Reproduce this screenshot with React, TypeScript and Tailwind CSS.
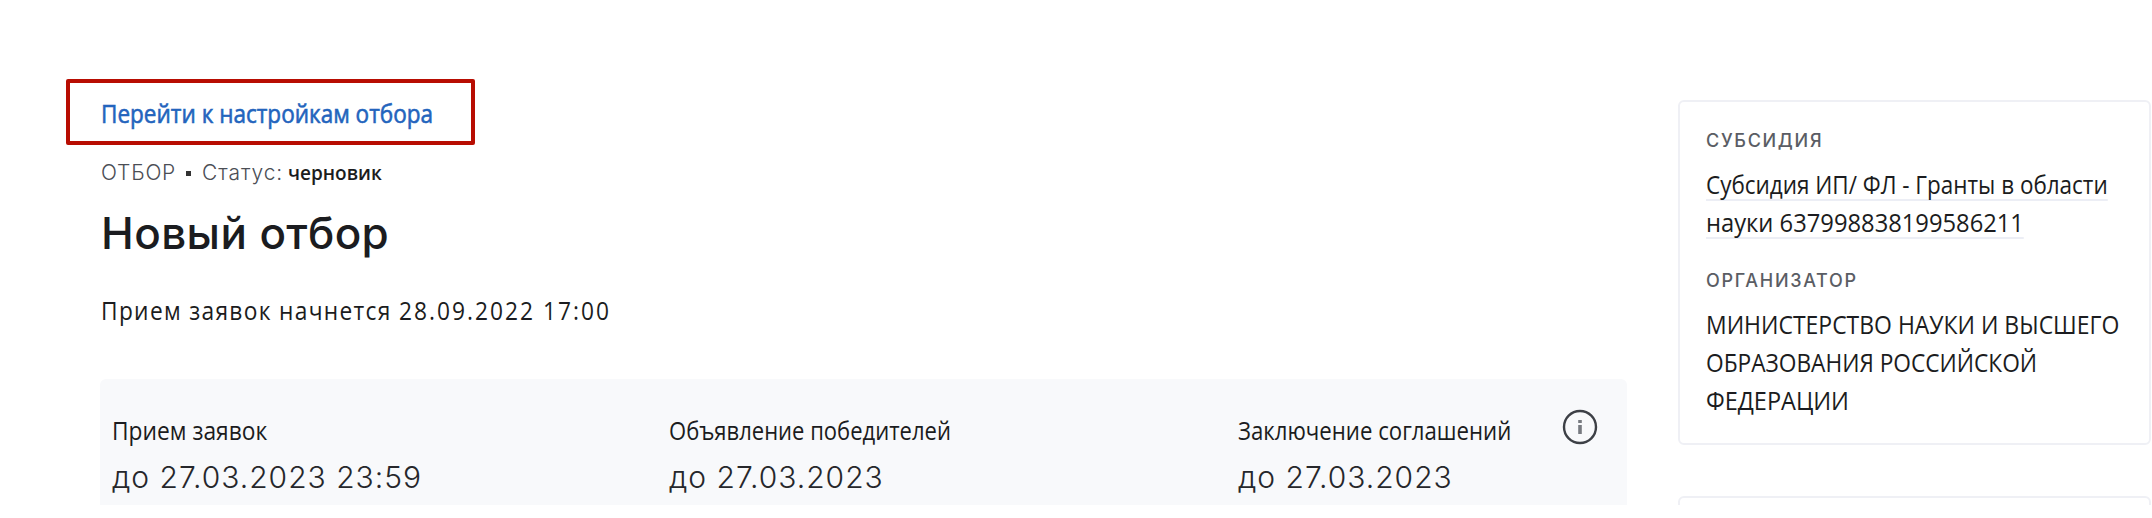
import type { ReactNode } from "react";

const pt = "font-['Open_Sans','Noto_Sans',sans-serif]";
const golos = "font-['Inter','Noto_Sans',sans-serif]";

function Line({ className, children }: { className: string; children: ReactNode }) {
  return <span className={`block w-max whitespace-nowrap origin-left ${className}`}>{children}</span>;
}

function Stage({ title, value, className, titleClass }: { title: string; value: string; className: string; titleClass: string }) {
  return (
    <div className={`shrink-0 ${className}`}>
      <Line className={`${pt} text-[26px] leading-[40px] ${titleClass}`}>{title}</Line>
      <Line className={`${golos} mt-[5px] text-[30px] leading-[44px] font-[350] tracking-[1px] text-[#26272b]`}>{value}</Line>
    </div>
  );
}

export default function App() {
  return (
    <div className="h-[518px] w-[2152px] overflow-hidden bg-white text-[#1b1c20]">
      <div className="flex h-[505px] items-start overflow-hidden">
        <main className="ml-[66px] w-[1561px] shrink-0 pt-[79px]">
          <div className="flex h-[66px] w-[409px] items-center rounded-[2px] border-4 border-[#b80d02] pt-[2px] pl-[31px]">
            <a href="#settings" className="text-[#2364bd]">
              <Line className={`${pt} scale-x-[0.867] text-[26px] leading-[36px] [-webkit-text-stroke:0.6px_#2364bd]`}>Перейти к настройкам отбора</Line>
            </a>
          </div>
          <div className="mt-[12px] flex h-[32px] items-center pl-[35px] text-[21px] leading-[32px]">
            <Line className={`${golos} font-light tracking-[0.8px] text-[#4b4e55]`}>ОТБОР</Line>
            <span className="mr-[11px] ml-[10px] size-[5px] bg-[#333]"></span>
            <Line className={`${golos} mr-[5px] font-light tracking-[0.9px] text-[#4b4e55]`}>Статус:</Line>
            <Line className={`${pt} scale-x-[0.95] text-[20px] font-semibold`}>черновик</Line>
          </div>
          <h1 className="mt-[16px] pl-[35px]">
            <Line className={`${golos} text-[44px] leading-[56px] font-[550] tracking-[0.4px]`}>Новый отбор</Line>
          </h1>
          <p className="mt-[29px] pl-[35px]">
            <Line className={`${pt} scale-x-[0.875] text-[26px] leading-[40px] tracking-[1.5px]`}>
              Прием заявок начнется <span className="tracking-[2.3px]">28.09.2022 17:00</span>
            </Line>
          </p>
          <section className="mt-[49px] ml-[34px] flex h-[160px] w-[1527px] items-start rounded-[6px] bg-[#f8f9fb] pt-[31px] pl-[12px]">
            <Stage title="Прием заявок" value="до 27.03.2023 23:59" className="w-[557px]" titleClass="scale-x-[0.876]" />
            <Stage title="Объявление победителей" value="до 27.03.2023" className="w-[569px]" titleClass="scale-x-[0.847]" />
            <Stage title="Заключение соглашений" value="до 27.03.2023" className="w-[324px]" titleClass="scale-x-[0.854]" />
            <svg viewBox="0 0 36 36" className="mt-[-1px] size-[36px]" fill="none" stroke="#3d4046">
              <circle cx="18" cy="18" r="16" strokeWidth="2.4" />
              <path d="M18 11v3M18 16v9" strokeWidth="3.6" stroke="#777a80" />
            </svg>
          </section>
        </main>
        <aside className="ml-[51px] w-[473px] shrink-0 pt-[100px]">
          <section className="h-[345px] rounded-[6px] border-2 border-[#eff0f5] pt-[23px] pl-[26px]">
            <Line className={`${golos} text-[18px] leading-[32px] font-[450] tracking-[1.7px] text-[#5a5d64]`}>СУБСИДИЯ</Line>
            <a href="#subsidy" className="mt-[11px] block text-[26px] leading-[31px]">
              <Line className={`${pt} mb-[5px] scale-x-[0.864] border-b-2 border-[#eceef5] pt-px leading-[30px]`}>Субсидия ИП/ ФЛ - Гранты в области</Line>
              <Line className={`${pt} scale-x-[0.913] border-b-2 border-[#eceef5] pt-px leading-[30px]`}>науки 637998838199586211</Line>
            </a>
            <Line className={`${golos} mt-[26px] text-[18px] leading-[32px] font-[450] tracking-[1.7px] text-[#5a5d64]`}>ОРГАНИЗАТОР</Line>
            <div className="mt-[8px] text-[26px] leading-[38px]">
              <Line className={`${pt} scale-x-[0.883]`}>МИНИСТЕРСТВО НАУКИ И ВЫСШЕГО</Line>
              <Line className={`${pt} scale-x-[0.873]`}>ОБРАЗОВАНИЯ РОССИЙСКОЙ</Line>
              <Line className={`${pt} scale-x-[0.904]`}>ФЕДЕРАЦИИ</Line>
            </div>
          </section>
          <section className="mt-[51px] h-[60px] rounded-[6px] border-2 border-[#eff0f5]"></section>
        </aside>
      </div>
    </div>
  );
}
